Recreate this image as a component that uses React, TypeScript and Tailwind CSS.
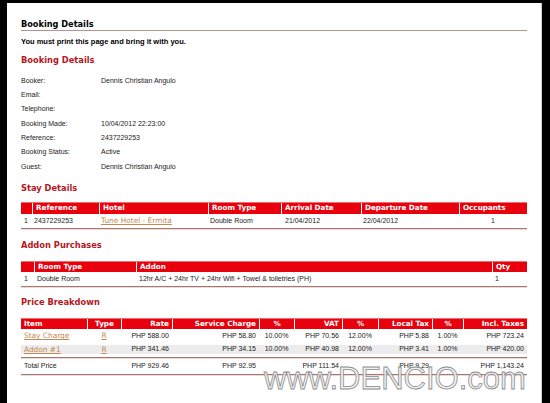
const sans = "font-['Liberation_Sans',Arial,sans-serif]";
const verdana = "font-['DejaVu_Sans',Verdana,sans-serif]";

type Col = { label: string; w: string; align: string };

const stayCols: Col[] = [
  { label: "", w: "w-[11px]", align: "justify-start" },
  { label: "Reference", w: "w-[67px]", align: "justify-start" },
  { label: "Hotel", w: "w-[109px]", align: "justify-start" },
  { label: "Room Type", w: "w-[73px]", align: "justify-start" },
  { label: "Arrival Date", w: "w-[80px]", align: "justify-start" },
  { label: "Departure Date", w: "w-[98px]", align: "justify-start" },
  { label: "Occupants", w: "w-[68px]", align: "justify-start" },
];

const addonCols: Col[] = [
  { label: "", w: "w-[13px]", align: "justify-start" },
  { label: "Room Type", w: "w-[102px]", align: "justify-start" },
  { label: "Addon", w: "w-[356px]", align: "justify-start" },
  { label: "Qty", w: "w-[35px]", align: "justify-start" },
];

const priceCols: Col[] = [
  { label: "Item", w: "w-[66px]", align: "justify-start" },
  { label: "Type", w: "w-[34px]", align: "justify-center" },
  { label: "Rate", w: "w-[51px]", align: "justify-end" },
  { label: "Service Charge", w: "w-[87px]", align: "justify-end" },
  { label: "%", w: "w-[35px]", align: "justify-center" },
  { label: "VAT", w: "w-[48px]", align: "justify-end" },
  { label: "%", w: "w-[36px]", align: "justify-center" },
  { label: "Local Tax", w: "w-[54px]", align: "justify-end" },
  { label: "%", w: "w-[31px]", align: "justify-center" },
  { label: "Incl. Taxes", w: "w-[64px]", align: "justify-end" },
];

const info = [
  ["Booker:", "Dennis Christian Angulo"],
  ["Email:", ""],
  ["Telephone:", ""],
  ["Booking Made:", "10/04/2012 22:23:00"],
  ["Reference:", "2437229253"],
  ["Booking Status:", "Active"],
  ["Guest:", "Dennis Christian Angulo"],
];

const priceRows = [
  ["Stay Charge", "R", "PHP 588.00", "PHP 58.80", "10.00%", "PHP 70.56", "12.00%", "PHP 5.88", "1.00%", "PHP 723.24"],
  ["Addon #1", "R", "PHP 341.46", "PHP 34.15", "10.00%", "PHP 40.98", "12.00%", "PHP 3.41", "1.00%", "PHP 420.00"],
];

const totalRow = ["Total Price", "", "PHP 929.46", "PHP 92.95", "", "PHP 111.54", "", "PHP 9.29", "", "PHP 1,143.24"];

const Link = ({ children }: { children: React.ReactNode }) => (
  <span className={`${verdana} text-[7.4px] text-[#c28a52] underline`}>{children}</span>
);

const Header = ({ cols, h }: { cols: Col[]; h: string }) => (
  <div className={`flex ${h} bg-[#e8000d] border-t border-[#f07070]`}>
    {cols.map((c, i) => (
      <div
        key={i}
        className={`${c.w} flex items-center ${c.align} px-[3px] ${verdana} text-[7.2px] font-bold text-white ${
          i > 0 ? "border-l border-white" : ""
        }`}
      >
        {c.label}
      </div>
    ))}
  </div>
);

const BottomLine = () => <div className="h-px bg-[#a87670] shadow-[0_1px_0_#eadada]" />;

const Heading = ({ children, h }: { children: React.ReactNode; h: string }) => (
  <div className={`flex ${h} items-center ${verdana} text-[8.3px] font-bold text-[#b3161e]`}>
    {children}
  </div>
);

export default function App() {
  return (
    <div className="relative flex h-[403px] w-[550px] overflow-hidden bg-black pl-[7px] pr-[9px] pt-[3px]">
      <div className={`flex-1 border-r border-[#cfcfcf] bg-white px-[14px] ${sans} text-[7px] text-[#222]`}>
        <div className="flex h-[28px] items-end border-b border-[#b09590] pb-[1px]">
          <span className={`${verdana} text-[8.2px] font-bold leading-[10px] text-black`}>Booking Details</span>
        </div>
        <div className="flex h-[22px] items-center text-[7.5px] font-bold text-black">
          You must print this page and bring it with you.
        </div>
        <Heading h="h-[14px]">Booking Details</Heading>

        <div className="pt-[7px]">
          {info.map(([label, value]) => (
            <div key={label} className="flex h-[14.3px] items-center">
              <div className="w-[80px]">{label}</div>
              <div>{value}</div>
            </div>
          ))}
        </div>

        <Heading h="h-[28px]">Stay Details</Heading>
        <Header cols={stayCols} h="h-[12px]" />
        <div className="flex h-[14px] items-center">
          <div className="w-[11px] px-[3px]">1</div>
          <div className="w-[67px] px-[2px]">2437229253</div>
          <div className="w-[109px] px-[2px]">
            <Link>Tune Hotel - Ermita</Link>
          </div>
          <div className="w-[73px] px-[2px]">Double Room</div>
          <div className="w-[80px] px-[4px]">21/04/2012</div>
          <div className="w-[98px] px-[2px]">22/04/2012</div>
          <div className="w-[68px] text-center">1</div>
        </div>
        <BottomLine />

        <Heading h="h-[32px]">Addon Purchases</Heading>
        <Header cols={addonCols} h="h-[11px]" />
        <div className="flex h-[14px] items-center">
          <div className="w-[13px] px-[3px]">1</div>
          <div className="w-[102px] px-[3px]">Double Room</div>
          <div className="w-[356px] px-[3px]">12hr A/C + 24hr TV + 24hr Wifi + Towel &amp; toiletries (PH)</div>
          <div className="w-[35px] px-[3px]">1</div>
        </div>
        <BottomLine />

        <Heading h="h-[31px]">Price Breakdown</Heading>
        <Header cols={priceCols} h="h-[11px]" />
        {priceRows.map((row, r) => (
          <div key={r} className={`flex h-[13.5px] items-center ${r === 1 ? "py-[2px]" : ""}`}>
            <div className={`flex h-full w-full items-center ${r === 1 ? "bg-[#ececec]" : ""}`}>
              {row.map((cell, i) => (
                <div key={i} className={`${priceCols[i].w} flex ${priceCols[i].align} px-[3px]`}>
                  {i < 2 ? <Link>{cell}</Link> : cell}
                </div>
              ))}
            </div>
          </div>
        ))}
        <div className="h-[1px]" />
        <BottomLine />
        <div className="flex h-[16px] items-center">
          {totalRow.map((cell, i) => (
            <div key={i} className={`${priceCols[i].w} flex ${priceCols[i].align} px-[3px]`}>
              {cell}
            </div>
          ))}
        </div>
        <BottomLine />
      </div>

      {/* watermark sits over the bottom of the price table, as in the screenshot */}
      <div
        className={`absolute left-[264px] top-[363px] ${sans} text-[31px] leading-none text-[#f0f0f0]/90 [-webkit-text-stroke:0.8px_#8c8c8c]`}
      >
        www.DENCIO.com
      </div>
    </div>
  );
}
